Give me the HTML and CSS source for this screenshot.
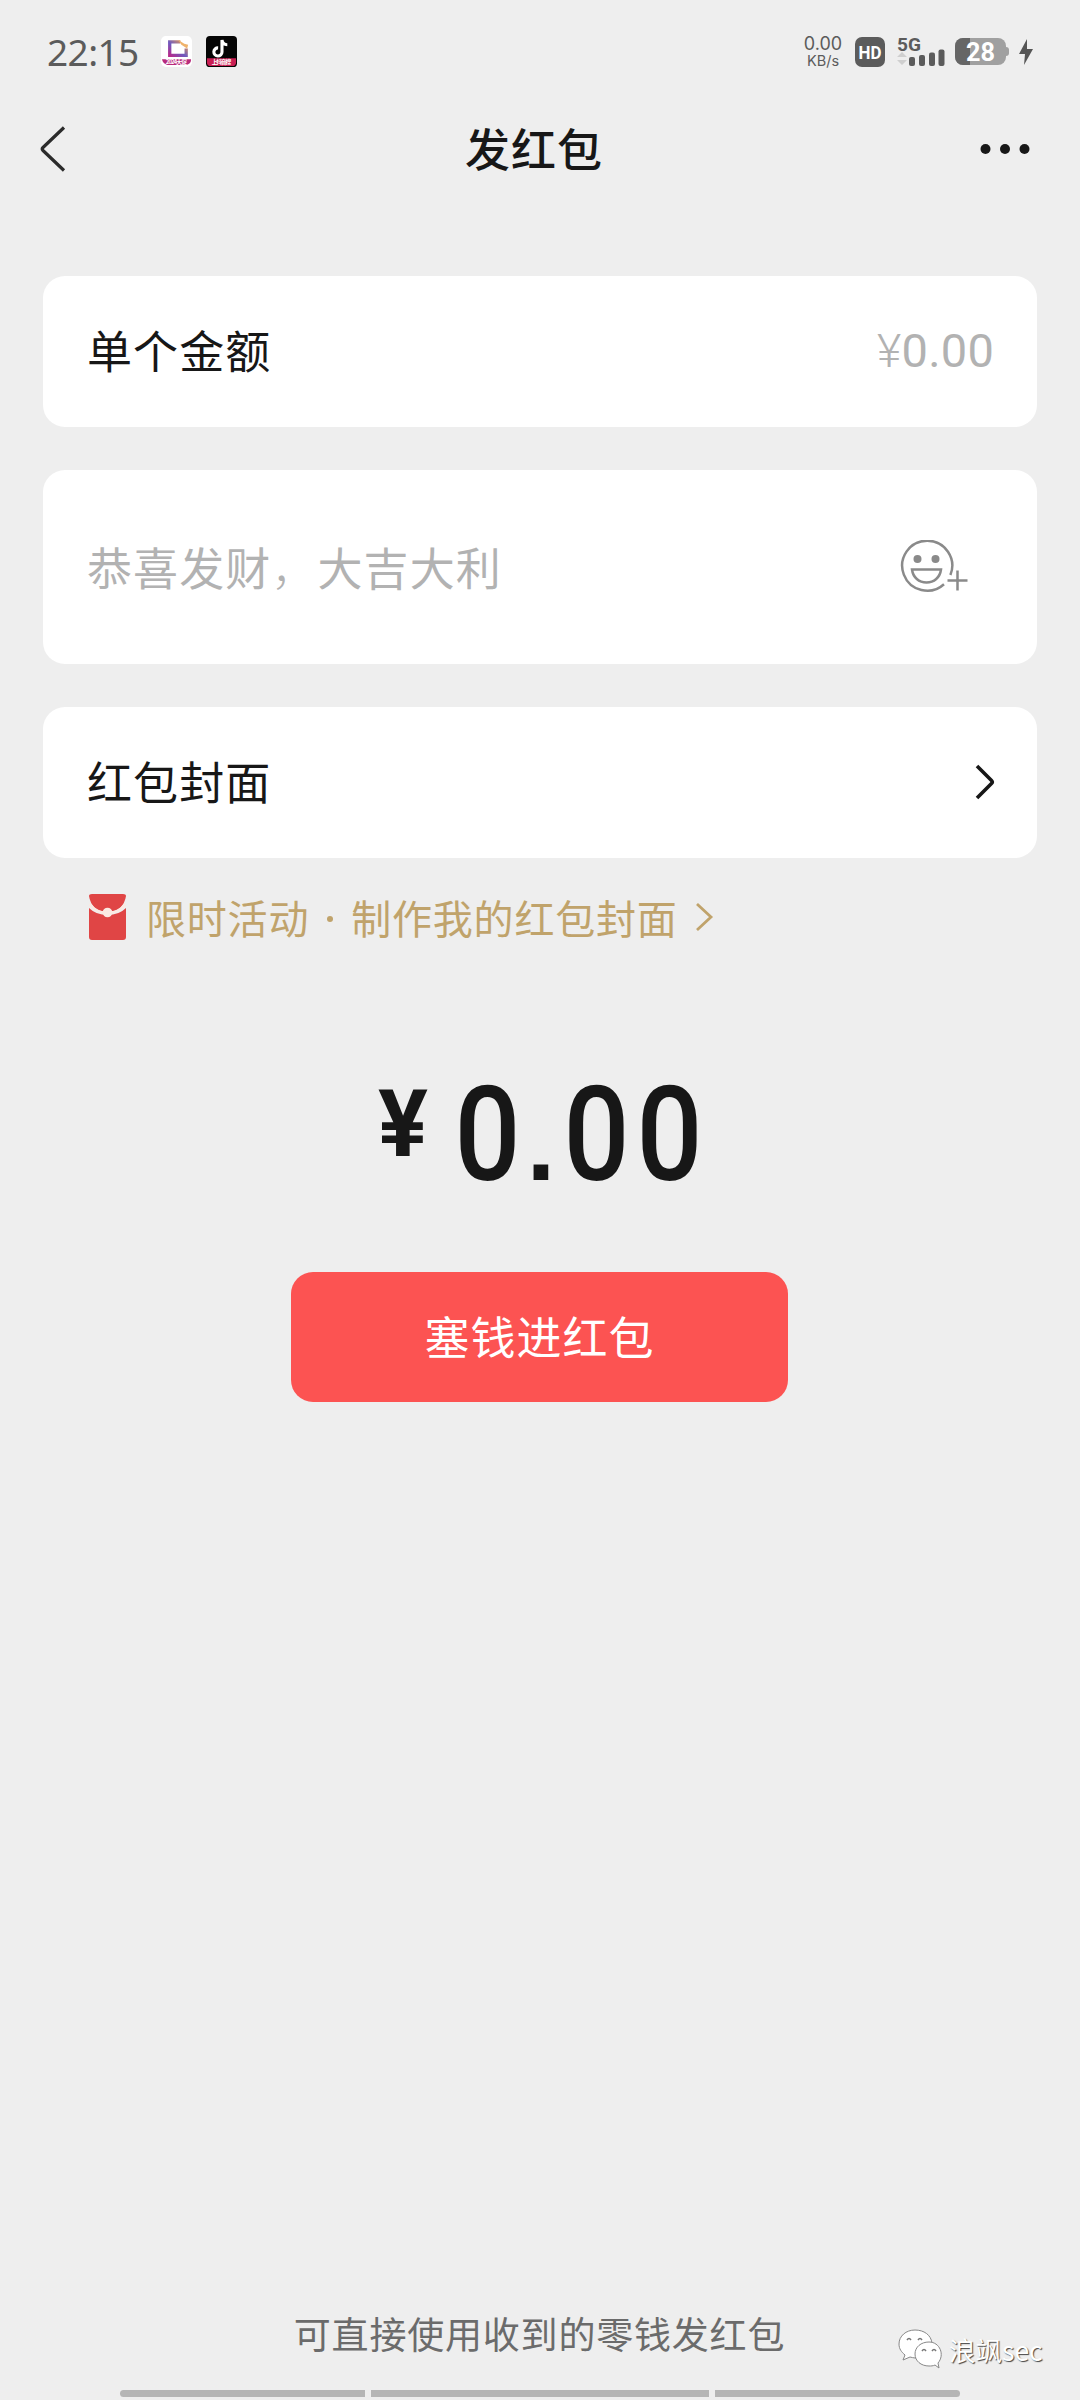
FILE: index.html
```html
<!DOCTYPE html>
<html lang="zh-CN">
<head>
<meta charset="utf-8">
<title>发红包</title>
<link rel="stylesheet" href="styles.css">
</head>
<body>
<div class="screen">
  <header class="status">
    <span class="time">22:15</span>
    <svg class="app" width="31" height="31" viewBox="0 0 32 32">
      <defs><linearGradient id="g" x1="0" y1="1" x2="1" y2="0"><stop offset="0" stop-color="#b52a8c"/><stop offset=".45" stop-color="#6d5ac0"/><stop offset="1" stop-color="#f3a04a"/></linearGradient></defs>
      <rect width="32" height="32" rx="5" fill="#fff"/>
      <path d="M20 6H9v14h17v-7" fill="none" stroke="url(#g)" stroke-width="3.400"/>
      <path d="M18 4l3 5 6 4 1-4-4-1z" fill="#efb36b"/>
      <path d="M1 24h30c0 4-2 5-5 6H7c-3-1-5-2-6-6z" fill="#b82b7c"/>
      <text x="16" y="29" class="tiny" textLength="22">2024大促</text>
    </svg>
    <svg class="app" width="31" height="31" viewBox="0 0 32 32">
      <rect width="32" height="32" rx="4" fill="#050505"/>
      <path d="M1 23h30v5a4 4 0 0 1-4 3H5a4 4 0 0 1-4-3z" fill="#c91e53"/>
      <path d="M16.500 4v12.500a4.200 4.200 0 1 1-4-4.200M16.500 4c.3 3 2.500 5 5.500 5" fill="none" stroke="#fff" stroke-width="3.200"/>
      <text x="16" y="29" class="tiny" textLength="20">上抖音搜</text>
    </svg>
    <div class="indicators">
      <div class="speed"><span class="rate">0.00</span><span class="unit">KB/s</span></div>
      <svg class="hd" width="30" height="30" viewBox="0 0 30 30"><rect width="30" height="30" rx="7" fill="#5b5b5b"/><text x="15" y="21.500" class="hd-label" textLength="23" lengthAdjust="spacingAndGlyphs">HD</text></svg>
      <svg class="signal" width="48" height="42" viewBox="0 -5 48 42">
        <text x="0" y="14.500" class="net-label" textLength="24" lengthAdjust="spacingAndGlyphs">5G</text>
        <path d="M0 21l5-5 5 5zM0 24h10l-5 5z" fill="#cfcfcf"/>
        <g fill="#5b5b5b"><rect x="12" y="21" width="6" height="9" rx="2"/><rect x="22" y="19" width="6" height="11" rx="2"/><rect x="32" y="16.500" width="6" height="13.500" rx="2"/><rect x="41.500" y="13.500" width="6" height="16.500" rx="2"/></g>
      </svg>
      <svg class="battery" width="55" height="36" viewBox="0 -4 55 36">
        <rect width="51" height="27" rx="8" fill="#a0a0a0"/><path d="M8 0h7v27H8a8 8 0 0 1-8-8V8a8 8 0 0 1 8-8z" fill="#666"/><path d="M51 9q3 0 3 3v3q0 3-3 3z" fill="#a0a0a0"/>
        <text x="25.500" y="22.500" class="battery-label" textLength="29" lengthAdjust="spacingAndGlyphs">28</text>
      </svg>
      <svg width="16" height="28" viewBox="0 0 16 28"><path d="M9 1L1 16h6l-1 11 9-16H9z" fill="#555"/></svg>
    </div>
  </header>

  <nav class="nav">
    <svg width="28" height="48" viewBox="0 0 28 48"><path d="M25 2.500L4 22.500q-1.500 1.500 0 3L25 45.500" fill="none" stroke="#2b2b2b" stroke-width="3.200"/></svg>
    <h1>发红包</h1>
    <svg class="more" width="50" height="12" viewBox="0 0 50 12" fill="#171717"><circle cx="5.500" cy="6" r="5"/><circle cx="25" cy="6" r="5"/><circle cx="44.500" cy="6" r="5"/></svg>
  </nav>

  <main>
    <section class="card amount"><span>单个金额</span><span class="placeholder money"><span class="money-sign">¥</span>0.00</span></section>
    <section class="card greeting"><span class="placeholder">恭喜发财<span class="comma">，</span>大吉大利</span>
      <svg width="70" height="54" viewBox="0 0 70 54" fill="none" stroke="#8a8a8a" stroke-width="2.500"><path d="M50.400 35A25 25 0 1 0 44 44.200"/><circle cx="17.500" cy="19" r="4" fill="#8a8a8a" stroke="none"/><circle cx="35.500" cy="19" r="4" fill="#8a8a8a" stroke="none"/><path d="M12 29.500h29c-1 8-7 13-14.500 13S13 37.500 12 29.500z"/><path d="M47.500 40.500h20M57.500 30.500v20"/></svg>
    </section>
    <section class="card cover"><span>红包封面</span>
      <svg width="22" height="38" viewBox="0 0 22 38"><path d="M3 3l14.500 14.500q1.500 1.500 0 3L3 35" fill="none" stroke="#171717" stroke-width="3.600"/></svg>
    </section>
    <div class="promo">
      <svg width="37" height="46" viewBox="0 0 37 46"><path d="M3 0h31q3 0 3 2Q36 9 31 14Q26 17.500 18.500 17.500T6 14Q1 9 0 2Q0 0 3 0zM0 14Q7 21 18.500 21T37 14v29q0 3-3 3H3q-3 0-3-3z" fill="#e04545"/><path d="M.5 10Q7 19 18.500 19T36.500 10" fill="none" stroke="#fbe9e2" stroke-width="2.600"/><circle cx="18.500" cy="18.500" r="4.800" fill="#fbe9e2"/></svg>
      <span class="promo-text">限时活动</span><span class="dot"><i></i></span><span>制作我的红包封面</span>
      <svg class="promo-arrow" width="19" height="30" viewBox="0 0 19 30"><path d="M2 2l14 13L2 28" fill="none" stroke="#c0a36b" stroke-width="2.800"/></svg>
    </div>
    <div class="total"><svg width="330" height="190" viewBox="0 0 330 190"><text x="1" y="118" class="yen" textLength="50" lengthAdjust="spacingAndGlyphs">¥</text><text x="77.500" y="142" class="digits" textLength="66" lengthAdjust="spacingAndGlyphs">0</text><text x="149.500" y="142" class="point">.</text><text x="186.500" y="142" class="digits" textLength="66" lengthAdjust="spacingAndGlyphs">0</text><text x="259.500" y="142" class="digits" textLength="66" lengthAdjust="spacingAndGlyphs">0</text></svg></div>
    <button class="pay">塞钱进红包</button>
  </main>

  <footer>
    <p>可直接使用收到的零钱发红包</p>
    <div class="navbar"><i></i><i></i><i></i></div>
  </footer>
  <div class="watermark">
    <svg width="46" height="42" viewBox="0 0 46 42" fill="#fff" stroke="#888" stroke-width="1"><path d="M17 1C8 1 1 7 1 15c0 5 2.500 8 6 11l-2 5 7-3c14 4 24-3 22-14C33 6 26 1 17 1z"/><path d="M31 13c-8 0-14 5-14 12s6 12 14 12c2 0 4 0 6-1l4 3-1-5c7-8 2-21-9-21z"/><path d="M9 11q2-3 4 0M20 11q2-3 4 0M24 22q2-3 4 0M34 22q2-3 4 0" fill="none" stroke="#777" stroke-width="1.500"/></svg>
    <span>浪飒sec</span>
  </div>
</div>
</body>
</html>
```
FILE: styles.css
```css
* { box-sizing: border-box; }
body { margin: 0; background: #eee; }
.screen {
  position: relative;
  width: 1080px;
  height: 2400px;
  display: flex;
  flex-direction: column;
  background: #eee;
  color: #171717;
  font-family: Roboto, "Noto Sans CJK SC", sans-serif;
  overflow: hidden;
}
svg { display: block; flex: none; }
span { white-space: nowrap; }

.status { height: 104px; padding: 0 46px 0 47px; display: flex; align-items: center; color: #5b5b5b; }
.time { width: 114px; font: 37px/40px "Noto Sans", sans-serif; letter-spacing: -.6px; }
.app { margin-right: 14px; margin-top: -2px; }
.tiny { font: bold 6px "Noto Sans CJK SC", sans-serif; fill: #fff; text-anchor: middle; }
.indicators { margin-left: auto; display: flex; align-items: center; }
.speed { width: 40px; margin-right: 12px; display: flex; flex-direction: column; align-items: center; font-family: Inter, sans-serif; line-height: 17px; }
.rate { font-size: 18px; }
.unit { font-size: 14.500px; }
.hd { margin-right: 12px; }
.hd-label { font: bold 18px Roboto, sans-serif; fill: #fff; text-anchor: middle; }
.signal { margin-right: 10px; }
.net-label { font: bold 19px Roboto, sans-serif; fill: #5b5b5b; }
.battery { margin-right: 8px; }
.battery-label { font: bold 25px Roboto, sans-serif; fill: #fff; text-anchor: middle; }

.nav { height: 92px; margin-top: -1px; padding: 0 50px 0 39px; display: grid; grid-template-columns: 195px 1fr 196px; align-items: center; }
.nav h1 { margin: -3px 0 0; font: 500 45px/60px "Noto Sans CJK SC", sans-serif; letter-spacing: 1px; text-align: center; }
.more { justify-self: end; }

main { padding: 81px 43px 0; display: flex; flex-direction: column; }
.card {
  height: 151px;
  margin-bottom: 43px;
  padding: 0 43px 3px 44px;
  display: flex;
  align-items: center;
  justify-content: space-between;
  background: #fff;
  border-radius: 22px;
  font: 45px/60px "Noto Sans CJK SC", sans-serif;
  letter-spacing: 1.100px;
}
.placeholder { color: #b2b2b2; }
.money { margin-top: 2px; font: 47px/56px Roboto, sans-serif; letter-spacing: .2px; }
.money-sign { font-weight: 300; }
.comma { font-weight: 300; }
.greeting { height: 194px; padding-right: 67px; padding-bottom: 0; }
.cover { margin-bottom: 34px; padding-right: 41px; }
.cover svg { margin-top: 2px; }
.promo { height: 50px; padding-left: 46px; display: flex; align-items: center; color: #c0a36b; font: 40px/50px "Noto Sans CJK SC", sans-serif; letter-spacing: .8px; }
.promo-text { margin-left: 20px; }
.dot { width: 42px; display: flex; justify-content: center; }
.dot i { width: 6px; height: 6px; margin-top: 3px; border-radius: 50%; background: #c0a36b; }
.promo-arrow { margin-left: 17px; }
.total { height: 190px; margin: 96px 0 44px 334px; }
.yen { font: 700 92px Roboto, sans-serif; fill: #171717; }
.digits { font: 500 131px Roboto, sans-serif; fill: #171717; }
.point { font: 700 104px "Liberation Sans", sans-serif; fill: #171717; }
.pay { align-self: center; width: 497px; height: 130px; margin-right: 1px; padding: 0 0 2px; border: 0; border-radius: 22px; background: #fc5352; color: #fff; font: 45px/60px "Noto Sans CJK SC", sans-serif; letter-spacing: 1px; }

footer { margin-top: auto; }
footer p { margin: 0 1px 30px 0; text-align: center; color: #6b6b6b; font: 37px/54px "Noto Sans CJK SC", sans-serif; letter-spacing: .8px; }
.navbar { height: 10px; padding: 0 120px; display: grid; grid-template-columns: 245px 338px 245px; gap: 6px; }
.navbar i { height: 7px; background: #b5b5b5; }
.navbar i:first-child { border-radius: 4px 0 0 4px; }
.navbar i:last-child { border-radius: 0 4px 4px 0; }
.watermark { position: absolute; left: 898px; top: 2329px; display: flex; gap: 5px; color: #fff; font: 26.500px/42px "Noto Sans CJK SC", sans-serif; text-shadow: 1px 1px 1px #444; }
```
